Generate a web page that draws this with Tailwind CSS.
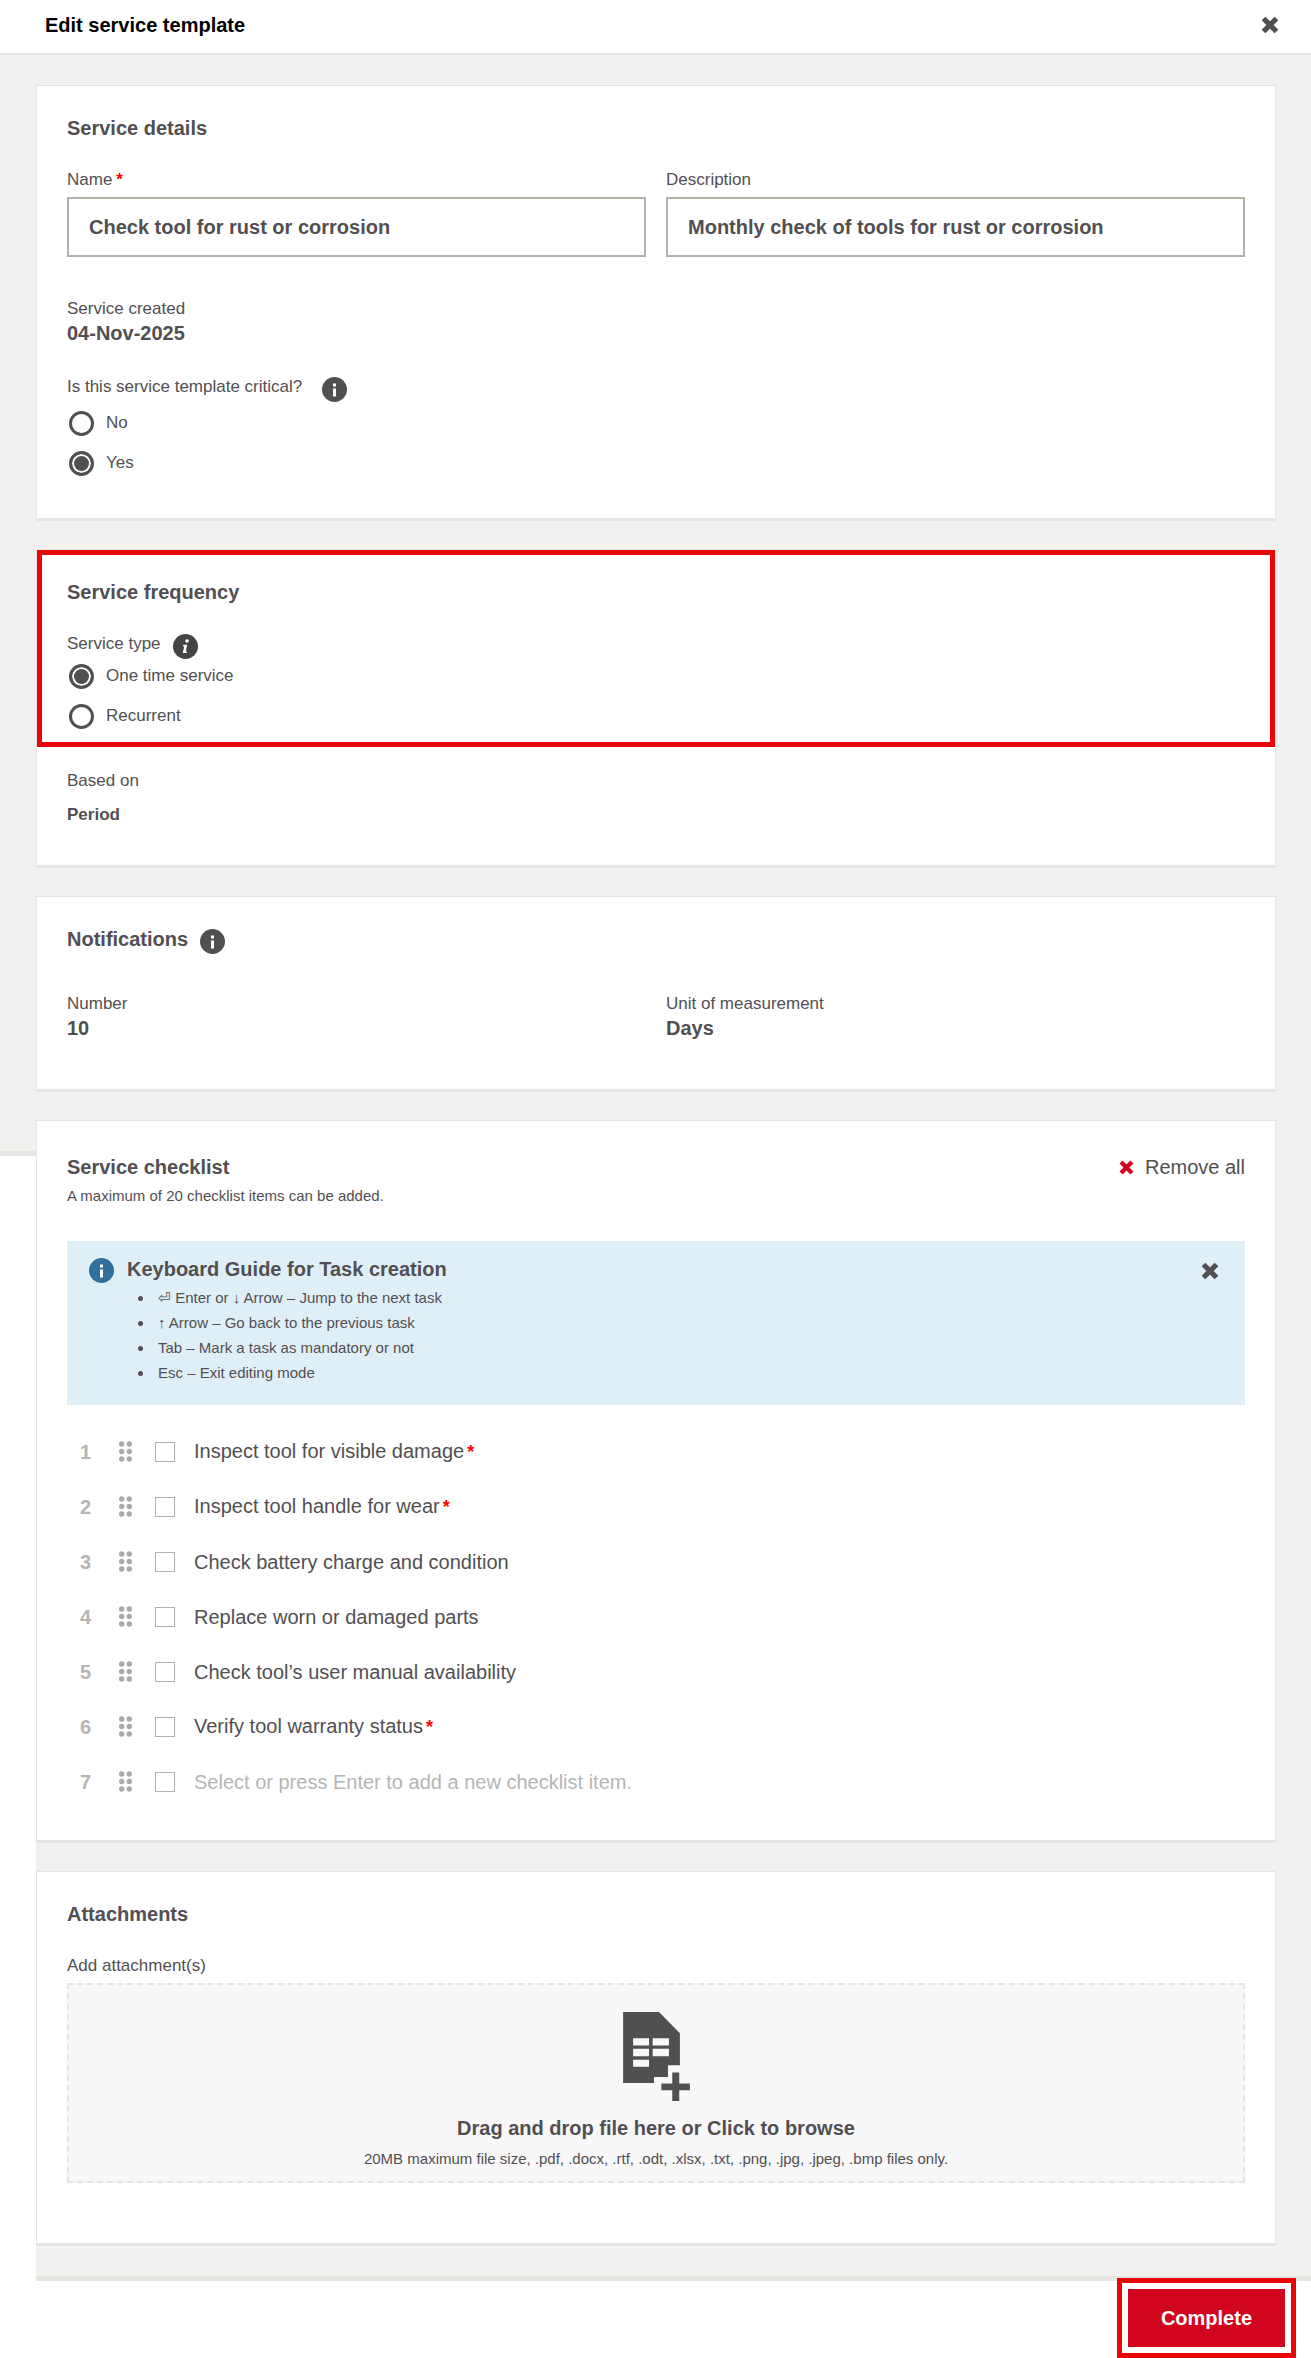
<!DOCTYPE html>
<html lang="en">
  <head>
    <meta charset="utf-8">
    <title>Edit service template</title>
    <meta name="viewport" content="width=device-width, initial-scale=1">
    <script src="https://cdn.jsdelivr.net/npm/@tailwindcss/browser@4"></script>
  </head>
  <body class="bg-white font-['Liberation_Sans',Arial,sans-serif] text-[17px] leading-6 text-[#524f53]">
    <!-- shared icons -->
    <svg class="hidden">
      <symbol id="icon_close" viewBox="0 0 18 18">
        <path d="M2.5 2.5 15.5 15.5M15.5 2.5 2.5 15.5" fill="none" stroke="currentColor" stroke-width="5.2"/>
      </symbol>
      <symbol id="icon_info" viewBox="0 0 25 25">
        <circle cx="12.5" cy="12.5" r="12.5" fill="currentColor"/>
        <path d="M11 6.5h3v3h-3zM11 11.5h3v8h-3z" fill="#fff"/>
      </symbol>
      <symbol id="icon_info_italic" viewBox="0 0 25 25">
        <circle cx="12.5" cy="12.5" r="12.5" fill="#444"/>
        <circle cx="14" cy="7" r="1.8" fill="#fff"/>
        <path d="M10.3 10.8h4l-1.6 6.6h1.4l-.4 1.6h-4l1.6-6.6H9.9z" fill="#fff"/>
      </symbol>
      <symbol id="icon_grip" viewBox="0 0 13 21">
        <g fill="#aaa">
          <circle cx="2.7" cy="3" r="2.7"/><circle cx="10.3" cy="3" r="2.7"/>
          <circle cx="2.7" cy="10.5" r="2.7"/><circle cx="10.3" cy="10.5" r="2.7"/>
          <circle cx="2.7" cy="18" r="2.7"/><circle cx="10.3" cy="18" r="2.7"/>
        </g>
      </symbol>
    </svg>

    <header class="flex items-center justify-between h-[55px] pb-[3px] pl-[45px] pr-8 border-b-2 border-[#e5e5e3]">
      <h1 class="text-[20px] font-bold text-black">Edit service template</h1>
      <button type="button" aria-label="Close"><svg class="size-[18px]"><use href="#icon_close"/></svg></button>
    </header>

    <div class="flex items-start">
      <div class="w-9 h-[1101px] shrink-0 bg-[#f3f1f0] border-b-[5px] border-[#e5e5e1]"></div>

      <main class="flex flex-col flex-1 gap-7 pt-[30px] pr-[35px] pb-[30px] bg-[#f3f1f0] border-b-[5px] border-[#e5e5e1]">
        <section class="px-[30px] pt-7 pb-[35px] bg-white border border-b-3 border-[#e5e5e3]">
          <h2 class="mb-[26px] text-[20px] leading-7 font-bold">Service details</h2>
          <div class="grid grid-cols-2 gap-5">
            <div>
              <label for="name" class="block">Name<span class="ml-1 font-bold text-[#f00]">*</span></label>
              <input id="name" type="text" value="Check tool for rust or corrosion" class="w-full h-[60px] mt-[5px] px-5 border-2 border-[#b5b1a8] text-[20px] font-bold">
            </div>
            <div>
              <label for="description" class="block">Description</label>
              <input id="description" type="text" value="Monthly check of tools for rust or corrosion" class="w-full h-[60px] mt-[5px] px-5 border-2 border-[#b5b1a8] text-[20px] font-bold">
            </div>
          </div>
          <p class="mt-10">Service created</p>
          <p class="text-[20px] font-bold">04-Nov-2025</p>
          <div role="radiogroup" aria-labelledby="critical_label" class="mt-[30px]">
            <div class="flex items-center gap-5 h-6">
              <p id="critical_label">Is this service template critical?</p>
              <svg class="size-[25px] mt-1"><use href="#icon_info"/></svg>
            </div>
            <div class="mt-1">
              <label class="flex items-center gap-3 h-10 pl-0.5"><input type="radio" name="critical" class="appearance-none size-[25px] rounded-full border-3 border-[#524f53] checked:bg-[#524f53] checked:shadow-[inset_0_0_0_2px_#fff]">No</label>
              <label class="flex items-center gap-3 h-10 pl-0.5"><input type="radio" name="critical" checked class="appearance-none size-[25px] rounded-full border-3 border-[#524f53] checked:bg-[#524f53] checked:shadow-[inset_0_0_0_2px_#fff]">Yes</label>
            </div>
          </div>
        </section>

        <section class="pb-[38px] bg-white border border-b-3 border-[#e5e5e3]">
          <div class="px-[25px] pt-[23px] pb-[6px] border-5 border-[#e80606]">
            <h2 class="mb-[26px] text-[20px] leading-7 font-bold">Service frequency</h2>
            <div role="radiogroup" aria-labelledby="type_label">
              <div class="flex items-center gap-3 h-6">
                <p id="type_label">Service type</p>
                <svg class="size-[25px] mt-1"><use href="#icon_info_italic"/></svg>
              </div>
              <label class="flex items-center gap-3 h-10 pl-0.5"><input type="radio" name="service_type" checked class="appearance-none size-[25px] rounded-full border-3 border-[#524f53] checked:bg-[#524f53] checked:shadow-[inset_0_0_0_2px_#fff]">One time service</label>
              <label class="flex items-center gap-3 h-10 pl-0.5"><input type="radio" name="service_type" class="appearance-none size-[25px] rounded-full border-3 border-[#524f53] checked:bg-[#524f53] checked:shadow-[inset_0_0_0_2px_#fff]">Recurrent</label>
            </div>
          </div>
          <div class="px-[30px] pt-[22px]">
            <p>Based on</p>
            <p class="mt-[10px] font-bold">Period</p>
          </div>
        </section>

        <section class="px-[30px] pt-7 pb-[49px] bg-white border border-b-3 border-[#e5e5e3]">
          <div class="flex items-center gap-3 h-7 mb-[39px]">
            <h2 class="text-[20px] leading-7 font-bold">Notifications</h2>
            <svg class="size-[25px] mt-1"><use href="#icon_info"/></svg>
          </div>
          <div class="grid grid-cols-2 gap-5">
            <div>
              <p>Number</p>
              <p class="text-[20px] font-bold">10</p>
            </div>
            <div>
              <p>Unit of measurement</p>
              <p class="text-[20px] font-bold">Days</p>
            </div>
          </div>
        </section>

        <section class="px-[30px] pt-8 pb-[31px] bg-white border border-b-3 border-[#e5e5e3]">
          <div class="flex items-center justify-between">
            <h2 class="text-[20px] leading-7 font-bold">Service checklist</h2>
            <button type="button" class="flex items-center gap-[11px] text-[20px] leading-7"><svg class="size-[15px] text-[#d2051e]"><use href="#icon_close"/></svg>Remove all</button>
          </div>
          <p class="mt-[5px] text-[15px] leading-5">A maximum of 20 checklist items can be added.</p>

          <div class="flex items-start mt-[35px] pt-[14px] pr-[26px] pb-5 pl-[22px] bg-[#dfeff8]">
            <svg class="size-[25px] mt-[3px] text-[#2f6f9b]"><use href="#icon_info"/></svg>
            <div class="flex-1 ml-[13px]">
              <h3 class="text-[20px] leading-7 font-bold">Keyboard Guide for Task creation</h3>
              <ul class="mt-0.5 pl-[27px] list-disc text-[15px] leading-[25px]">
                <li class="pl-1">⏎ Enter or ↓ Arrow – Jump to the next task</li>
                <li class="pl-1">↑ Arrow – Go back to the previous task</li>
                <li class="pl-1">Tab – Mark a task as mandatory or not</li>
                <li class="pl-1">Esc – Exit editing mode</li>
              </ul>
            </div>
            <button type="button" aria-label="Dismiss guide" class="mt-[7px]"><svg class="size-[18px]"><use href="#icon_close"/></svg></button>
          </div>

          <ol class="mt-[19px] text-[20px]">
            <li class="flex items-center h-[55px] pl-[13px]">
              <span class="w-[39px] font-bold text-[#b5b5b5]">1</span>
              <svg class="w-[13px] h-[21px] mr-[23px]"><use href="#icon_grip"/></svg>
              <input id="task_1" type="checkbox" class="appearance-none size-5 mr-[19px] border border-[#b0b0b0]">
              <label for="task_1">Inspect tool for visible damage<span class="ml-[3px] text-lg font-bold text-[#f00]">*</span></label>
            </li>
            <li class="flex items-center h-[55px] pl-[13px]">
              <span class="w-[39px] font-bold text-[#b5b5b5]">2</span>
              <svg class="w-[13px] h-[21px] mr-[23px]"><use href="#icon_grip"/></svg>
              <input id="task_2" type="checkbox" class="appearance-none size-5 mr-[19px] border border-[#b0b0b0]">
              <label for="task_2">Inspect tool handle for wear<span class="ml-[3px] text-lg font-bold text-[#f00]">*</span></label>
            </li>
            <li class="flex items-center h-[55px] pl-[13px]">
              <span class="w-[39px] font-bold text-[#b5b5b5]">3</span>
              <svg class="w-[13px] h-[21px] mr-[23px]"><use href="#icon_grip"/></svg>
              <input id="task_3" type="checkbox" class="appearance-none size-5 mr-[19px] border border-[#b0b0b0]">
              <label for="task_3">Check battery charge and condition</label>
            </li>
            <li class="flex items-center h-[55px] pl-[13px]">
              <span class="w-[39px] font-bold text-[#b5b5b5]">4</span>
              <svg class="w-[13px] h-[21px] mr-[23px]"><use href="#icon_grip"/></svg>
              <input id="task_4" type="checkbox" class="appearance-none size-5 mr-[19px] border border-[#b0b0b0]">
              <label for="task_4">Replace worn or damaged parts</label>
            </li>
            <li class="flex items-center h-[55px] pl-[13px]">
              <span class="w-[39px] font-bold text-[#b5b5b5]">5</span>
              <svg class="w-[13px] h-[21px] mr-[23px]"><use href="#icon_grip"/></svg>
              <input id="task_5" type="checkbox" class="appearance-none size-5 mr-[19px] border border-[#b0b0b0]">
              <label for="task_5">Check tool’s user manual availability</label>
            </li>
            <li class="flex items-center h-[55px] pl-[13px]">
              <span class="w-[39px] font-bold text-[#b5b5b5]">6</span>
              <svg class="w-[13px] h-[21px] mr-[23px]"><use href="#icon_grip"/></svg>
              <input id="task_6" type="checkbox" class="appearance-none size-5 mr-[19px] border border-[#b0b0b0]">
              <label for="task_6">Verify tool warranty status<span class="ml-[3px] text-lg font-bold text-[#f00]">*</span></label>
            </li>
            <li class="flex items-center h-[55px] pl-[13px]">
              <span class="w-[39px] font-bold text-[#b5b5b5]">7</span>
              <svg class="w-[13px] h-[21px] mr-[23px]"><use href="#icon_grip"/></svg>
              <input type="checkbox" aria-label="New item is mandatory" class="appearance-none size-5 mr-[19px] border border-[#b0b0b0]">
              <input type="text" aria-label="New checklist item" placeholder="Select or press Enter to add a new checklist item." class="flex-1 placeholder:text-[#b5b5b5]">
            </li>
          </ol>
        </section>

        <section class="px-[30px] pt-7 pb-[60px] bg-white border border-b-3 border-[#e5e5e3]">
          <h2 class="mb-[26px] text-[20px] leading-7 font-bold">Attachments</h2>
          <p id="attachments_label">Add attachment(s)</p>
          <button type="button" aria-describedby="attachments_label" class="flex flex-col items-center w-full h-[200px] mt-[5px] pt-[27px] bg-[#f8f8f8] border-2 border-dashed border-[#e5e5e1]">
            <svg class="w-[67px] h-[89px]" viewBox="0 0 201 268" fill="#524f53">
              <path fill-rule="evenodd" d="M0 0h108l63 64v96h-36v36H93v18H0zM30 79v22h48V79zM89 79v22h49V79zM30 111v22h48v-22zM89 111v22h49v-22zM30 144v21h48v-21z"/>
              <path d="M148 182h21v33h32v21h-32v32h-21v-32h-33v-21h33z"/>
            </svg>
            <span class="mt-[13px] text-[20px] leading-7 font-bold">Drag and drop file here or Click to browse</span>
            <span class="mt-[7px] text-[15px] leading-5">20MB maximum file size, .pdf, .docx, .rtf, .odt, .xlsx, .txt, .png, .jpg, .jpeg, .bmp files only.</span>
          </button>
        </section>
      </main>
    </div>

    <footer class="flex justify-end pt-2 pr-[26px] pb-[11px]">
      <button type="button" class="h-[58px] px-[33px] bg-[#d2051e] text-[20px] font-bold text-white outline-5 outline-offset-6 outline-[#e80606]">Complete</button>
    </footer>
  </body>
</html>
